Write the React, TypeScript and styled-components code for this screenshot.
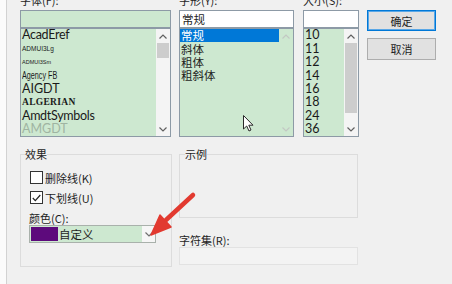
import React from 'react';
import styled, { createGlobalStyle } from 'styled-components';

const CJK = `"Noto Sans CJK SC", "Noto Sans", sans-serif`;
const LATIN = `Lato, "Noto Sans CJK SC", sans-serif`;

const Global = createGlobalStyle`
  html, body { margin: 0; padding: 0; background: #f0f0f0; overflow: hidden; }
  #root { width: 452px; height: 284px; overflow: hidden; }
`;

const Screen = styled.div`
  position: relative;
  width: 452px;
  height: 284px;
  display: flex;
  background: #f0f0f0;
  overflow: hidden;
`;

const WindowEdge = styled.div`
  flex: none;
  width: 6px;
  background: #fbfbfb;
  border-right: 1px solid #d2d2d2;
`;

const Dialog = styled.div`
  flex: 1;
  display: flex;
  flex-direction: column;
  padding-left: 13px;
  font-family: ${CJK};
  font-size: 11px;
  color: #1e1e1e;
`;

const TopRow = styled.div`
  display: flex;
  margin-top: -7px;
`;

const Column = styled.div<{ $w: number; $gap: number }>`
  flex: none;
  width: ${p => p.$w}px;
  margin-right: ${p => p.$gap}px;
  display: flex;
  flex-direction: column;
`;

const Label = styled.div`
  height: 14px;
  line-height: 14px;
  margin-bottom: 3px;
  white-space: nowrap;
`;

const Field = styled.div<{ $bg: string }>`
  box-sizing: border-box;
  height: 18px;
  border: 1px solid #8d9aa6;
  background: ${p => p.$bg};
  padding-left: 2px;
  line-height: 16px;
  font-size: 11.5px;
`;

const List = styled.div`
  box-sizing: border-box;
  height: 109px;
  border: 1px solid #8d9aa6;
  background: #cde8d0;
  display: flex;
  overflow: hidden;
`;

const Items = styled.div`
  flex: 1;
  min-width: 0;
  display: flex;
  flex-direction: column;
`;

const Row = styled.div<{ $sel?: boolean }>`
  flex: none;
  height: 13.4px;
  line-height: 13px;
  display: flex;
  align-items: center;
  padding-left: 1px;
  white-space: nowrap;
  font-size: 11.5px;
  background: ${p => (p.$sel ? '#0078d7' : 'transparent')};
  color: ${p => (p.$sel ? '#ffffff' : '#1e1e1e')};
`;

const FontName = styled.span<{ $family: string; $size: number; $weight?: number; $color?: string; $ls?: number; $sx?: number }>`
  display: inline-block;
  font-family: ${p => p.$family};
  font-size: ${p => p.$size}px;
  font-weight: ${p => p.$weight ?? 400};
  color: ${p => p.$color ?? '#1a1a1a'};
  letter-spacing: ${p => p.$ls ?? 0}px;
  transform: scaleX(${p => p.$sx ?? 1});
  transform-origin: left center;
  line-height: 1;
`;

const NumText = styled.span`
  font-family: ${LATIN};
  font-size: 12.5px;
  line-height: 1;
  color: #1a1a1a;
`;

const Scrollbar = styled.div<{ $track: string }>`
  flex: none;
  width: 14px;
  display: flex;
  flex-direction: column;
  background: ${p => p.$track};
`;

const ScrollButton = styled.div`
  flex: none;
  height: 14px;
  display: flex;
  align-items: center;
  justify-content: center;
`;

const Track = styled.div`
  flex: 1;
  display: flex;
  flex-direction: column;
`;

const Thumb = styled.div<{ $h: number }>`
  flex: none;
  height: ${p => p.$h}px;
  margin: 0 1px;
  background: #cdcdcd;
`;

const Button = styled.div<{ $primary?: boolean; $h: number }>`
  box-sizing: border-box;
  height: ${p => p.$h}px;
  border: 1px solid ${p => (p.$primary ? '#0078d7' : '#adadad')};
  box-shadow: ${p => (p.$primary ? 'inset 0 0 0 1px #5aa7e6' : 'none')};
  background: #e1e1e1;
  display: flex;
  align-items: center;
  justify-content: center;
  font-size: 11px;
  color: #1e1e1e;
  & + & { margin-top: 7px; }
`;

const BottomRow = styled.div`
  display: flex;
  margin-top: 10px;
`;

const Group = styled.fieldset<{ $w: number; $h: number; $pl: number }>`
  box-sizing: border-box;
  flex: none;
  width: ${p => p.$w}px;
  height: ${p => p.$h}px;
  margin: 0;
  padding: 0 0 0 ${p => p.$pl}px;
  border: 1px solid #dcdcdc;
  min-width: 0;
`;

const Legend = styled.legend`
  padding: 0;
  height: 14px;
  line-height: 14px;
  font-size: 11px;
  color: #1e1e1e;
`;

const GroupBody = styled.div`
  display: flex;
  flex-direction: column;
  padding-left: 4px;
`;

const CheckRow = styled.div<{ $mt: number }>`
  display: flex;
  align-items: center;
  height: 13px;
  margin-top: ${p => p.$mt}px;
  margin-left: 1px;
  gap: 2px;
  white-space: nowrap;
`;

const Box = styled.div`
  box-sizing: border-box;
  width: 13px;
  height: 13px;
  border: 1px solid #333;
  background: #fff;
  display: flex;
  align-items: center;
  justify-content: center;
`;

const SmallLabel = styled.div<{ $mt: number }>`
  height: 14px;
  line-height: 14px;
  margin-top: ${p => p.$mt}px;
  white-space: nowrap;
`;

const Combo = styled.div<{ $w: number; $bg: string; $border: string }>`
  box-sizing: border-box;
  width: ${p => p.$w}px;
  height: 18px;
  border: 1px solid ${p => p.$border};
  background: ${p => p.$bg};
  display: flex;
  align-items: stretch;
`;

const Swatch = styled.div<{ $c: string }>`
  flex: none;
  width: 27px;
  margin: 1px;
  background: ${p => p.$c};
`;

const ComboText = styled.div`
  flex: 1;
  line-height: 16px;
  font-size: 11.5px;
`;

const DropButton = styled.div`
  flex: none;
  width: 13px;
  background: #f6f6f6;
  display: flex;
  align-items: center;
  justify-content: center;
`;

const RightCol = styled.div`
  margin-left: 7px;
  width: 179px;
  display: flex;
  flex-direction: column;
`;

const Overlay = styled.svg`
  position: absolute;
  left: 0;
  top: 0;
  pointer-events: none;
`;

const Chevron = ({ up, color }: { up?: boolean; color: string }) => (
  <svg width="8" height="5" viewBox="0 0 8 5">
    <path d={up ? 'M0.5 4.5 L4 1 L7.5 4.5' : 'M0.5 0.5 L4 4 L7.5 0.5'} fill="none" stroke={color} strokeWidth="1.2" />
  </svg>
);

const fonts = [
  { name: 'AcadEref', family: LATIN, size: 12.5, ls: -0.3 },
  { name: 'ADMUI3Lg', family: '"Liberation Sans", sans-serif', size: 6.5 },
  { name: 'ADMUI3Sm', family: '"Liberation Sans", sans-serif', size: 5.5 },
  { name: 'Agency FB', family: '"Liberation Sans Narrow", "Liberation Sans", sans-serif', size: 10, sx: 0.72 },
  { name: 'AIGDT', family: LATIN, size: 12.5 },
  { name: 'ALGERIAN', family: '"Liberation Serif", serif', size: 9.5, weight: 700, ls: 0.3 },
  { name: 'AmdtSymbols', family: LATIN, size: 12.5, ls: -0.3 },
  { name: 'AMGDT', family: LATIN, size: 12.5, color: '#9fb4a2' },
];

const styles = ['常规', '斜体', '粗体', '粗斜体'];
const sizes = ['10', '11', '12', '14', '16', '18', '24', '36'];

export default function App() {
  return (
    <Screen>
      <Global />
      <WindowEdge />
      <Dialog>
        <TopRow>
          <Column $w={151} $gap={8}>
            <Label>字体(F):</Label>
            <Field $bg="#cde8d0" />
            <List>
              <Items>
                {fonts.map(f => (
                  <Row key={f.name}>
                    <FontName $family={f.family} $size={f.size} $weight={f.weight} $color={f.color} $ls={f.ls} $sx={f.sx}>
                      {f.name}
                    </FontName>
                  </Row>
                ))}
              </Items>
              <Scrollbar $track="#f4f4f4">
                <ScrollButton><Chevron up color="#606060" /></ScrollButton>
                <Track><Thumb $h={15} /></Track>
                <ScrollButton><Chevron color="#606060" /></ScrollButton>
              </Scrollbar>
            </List>
          </Column>
          <Column $w={115} $gap={9}>
            <Label>字形(Y):</Label>
            <Field $bg="#ffffff">常规</Field>
            <List>
              <Items>
                {styles.map((s, i) => (
                  <Row key={s} $sel={i === 0}>{s}</Row>
                ))}
              </Items>
              <Scrollbar $track="#cde8d0">
                <ScrollButton><Chevron up color="#c2c8c3" /></ScrollButton>
                <Track />
                <ScrollButton><Chevron color="#c2c8c3" /></ScrollButton>
              </Scrollbar>
            </List>
          </Column>
          <Column $w={56} $gap={8}>
            <Label>大小(S):</Label>
            <Field $bg="#ffffff" />
            <List>
              <Items>
                {sizes.map(s => (
                  <Row key={s}><NumText>{s}</NumText></Row>
                ))}
              </Items>
              <Scrollbar $track="#f4f4f4">
                <ScrollButton><Chevron up color="#606060" /></ScrollButton>
                <Track><Thumb $h={70} /></Track>
                <ScrollButton><Chevron color="#606060" /></ScrollButton>
              </Scrollbar>
            </List>
          </Column>
          <Column $w={69} $gap={0}>
            <Label />
            <Button $primary $h={21}>确定</Button>
            <Button $h={22}>取消</Button>
          </Column>
        </TopRow>
        <BottomRow>
          <Group $w={152} $h={120} $pl={4}>
            <Legend>效果</Legend>
            <GroupBody>
              <CheckRow $mt={10}>
                <Box />
                <span>删除线(K)</span>
              </CheckRow>
              <CheckRow $mt={7}>
                <Box>
                  <svg width="9" height="8" viewBox="0 0 9 8">
                    <path d="M0.8 4 L3.3 6.6 L8.3 1" fill="none" stroke="#222" strokeWidth="1.2" />
                  </svg>
                </Box>
                <span>下划线(U)</span>
              </CheckRow>
              <SmallLabel $mt={7}>颜色(C):</SmallLabel>
              <Combo $w={127} $bg="#cde8d0" $border="#a9b1ab">
                <Swatch $c="#5d0a7c" />
                <ComboText>自定义</ComboText>
                <DropButton><Chevron color="#707070" /></DropButton>
              </Combo>
            </GroupBody>
          </Group>
          <RightCol>
            <Group $w={179} $h={71} $pl={5}>
              <Legend>示例</Legend>
            </Group>
            <SmallLabel $mt={15}>字符集(R):</SmallLabel>
            <Combo $w={179} $bg="#f3f3f3" $border="#e2e2e2" />
          </RightCol>
        </BottomRow>
      </Dialog>
      <Overlay width="452" height="284" viewBox="0 0 452 284">
        <line x1="193" y1="195" x2="166" y2="220" stroke="#e23a30" strokeWidth="4.5" strokeLinecap="round" />
        <polygon points="151,235 171,227 160,215" fill="#e23a30" stroke="#e23a30" strokeWidth="1.5" strokeLinejoin="round" />
        <path
          d="M243.5 115.5 L243.5 129 L246.7 126 L249 131 L251 130 L248.8 125.2 L253 125.2 Z"
          fill="#ffffff"
          stroke="#2a2a2a"
          strokeWidth="1"
          strokeLinejoin="round"
        />
      </Overlay>
    </Screen>
  );
}
